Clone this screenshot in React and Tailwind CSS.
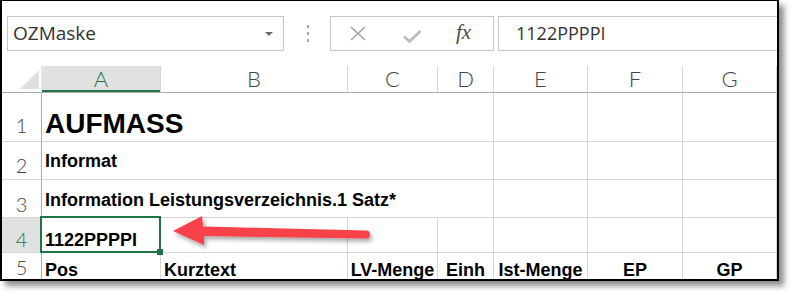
import React from 'react';

const cellFont = "font-['Liberation_Sans',Arial,sans-serif] font-bold leading-none text-black";
const headFont = "font-['Lato','Open_Sans',sans-serif] font-light leading-none";
const uiFont = "font-['Open_Sans','Noto_Sans',sans-serif]";

const columns = [
    { label: 'A', active: true },
    { label: 'B' },
    { label: 'C' },
    { label: 'D' },
    { label: 'E' },
    { label: 'F' },
    { label: 'G' },
];

const RowHead = ({ n, active, pad }) => (
    <div
        className={`flex justify-center border-r border-b border-r-[#ababab] border-b-[#d6d6d6] text-[20px] ${headFont} ${pad} ${
            active ? 'bg-[#e1e1e1] text-[#217346]' : 'bg-white text-[#444]'
        }`}
    >
        {n}
    </div>
);

const Cell = ({ children, className = '' }) => (
    <div className={`flex border-r border-b border-[#d6d6d6] whitespace-nowrap ${className}`}>{children}</div>
);

const FormulaBar = () => (
    <div className="h-[65px] flex items-start pt-[15px] pl-[5px]">
        <div className="w-[277px] h-[35px] border border-[#c6c6c6] flex items-center justify-between pl-[5px] pr-[10px]">
            <span className={`text-[19px] text-[#333] ${uiFont}`}>OZMaske</span>
            <span className="w-0 h-0 border-l-[4px] border-r-[4px] border-t-[4px] border-l-transparent border-r-transparent border-t-[#6a6a6a]" />
        </div>
        <div className="w-[46px] h-[35px] flex flex-col items-center justify-center gap-[4px] pl-[2px]">
            <span className="w-[2px] h-[3px] bg-[#a6a6a6]" />
            <span className="w-[2px] h-[3px] bg-[#a6a6a6]" />
            <span className="w-[2px] h-[3px] bg-[#a6a6a6]" />
        </div>
        <div className="w-[164px] h-[35px] border border-[#c6c6c6] flex items-center pl-[19px]">
            <svg width="16" height="15" viewBox="0 0 16 15">
                <path d="M1 1 L15 14 M15 1 L1 14" stroke="#a3a3a3" strokeWidth="1.5" fill="none" />
            </svg>
            <svg width="19" height="13" viewBox="0 0 19 13" className="ml-[37px] mt-[5px]">
                <path d="M1 6.5 L6.5 11.5 L17.5 1" stroke="#b9b9b9" strokeWidth="2.6" fill="none" />
            </svg>
            <span className="ml-[34px] -mt-[2px] font-['Liberation_Serif',serif] italic text-[21px] text-[#4a4a4a]">fx</span>
        </div>
        <div className="flex-1 h-[35px] ml-[4px] border border-r-0 border-[#c6c6c6] flex items-center pl-[17px]">
            <span className={`text-[18px] text-[#333] ${uiFont}`}>1122PPPPI</span>
        </div>
    </div>
);

const Arrow = () => (
    <svg className="absolute inset-0 pointer-events-none" width="793" height="296" viewBox="0 0 793 296">
        <defs>
            <filter id="arrowShadow" x="-10%" y="-50%" width="120%" height="200%">
                <feDropShadow dx="2" dy="3" stdDeviation="2" floodColor="#000" floodOpacity="0.35" />
            </filter>
        </defs>
        <path
            d="M173 231 L202 216 L203 226.5 L366 230.5 A4 4 0 0 1 366 238.5 L204 236 L204 245 Z"
            fill="#f7434a"
            filter="url(#arrowShadow)"
        />
    </svg>
);

export default function App() {
    return (
        <div className="relative w-[793px] h-[296px] bg-white overflow-hidden">
            <div className="w-[779px] h-[281px] border-t border-l-2 border-r-2 border-b-2 border-black bg-white overflow-hidden shadow-[5px_5px_6px_rgba(0,0,0,0.45)]">
                <FormulaBar />
                <div className="grid grid-cols-[40px_119px_187px_90px_56px_94px_95px_94px] grid-rows-[27px_49px_38px_38px_35px_38px]">
                    {/* select-all corner */}
                    <div className="flex items-start pl-[18px] pt-[4px] border-b border-r border-b-[#ababab] border-r-[#e6e6e6]">
                        <svg width="19" height="19" viewBox="0 0 19 19">
                            <path d="M19 0 L19 19 L0 19 Z" fill="#dfdfdf" />
                        </svg>
                    </div>
                    {columns.map(col => (
                        <div
                            key={col.label}
                            className={`flex items-end justify-center pb-[2px] border-b border-r border-b-[#ababab] border-r-[#d6d6d6] text-[22px] ${headFont} ${
                                col.active ? 'bg-[#e1e1e1] text-[#217346] shadow-[inset_0_-2px_0_#217346]' : 'text-[#444]'
                            }`}
                        >
                            {col.label}
                        </div>
                    ))}

                    {/* row 1 */}
                    <RowHead n="1" pad="items-end pb-[6px]" />
                    <Cell className="col-span-4 items-end pl-[3px] pb-[3px]">
                        <span className={`${cellFont} text-[28px]`}>AUFMASS</span>
                    </Cell>
                    <Cell />
                    <Cell />
                    <Cell />

                    {/* row 2 */}
                    <RowHead n="2" pad="items-end pb-[4px]" />
                    <Cell className="col-span-4 items-end pl-[3px] pb-[9px]">
                        <span className={`${cellFont} text-[18px]`}>Informat</span>
                    </Cell>
                    <Cell />
                    <Cell />
                    <Cell />

                    {/* row 3 */}
                    <RowHead n="3" pad="items-end pb-[3px]" />
                    <Cell className="col-span-4 items-end pl-[3px] pb-[8px]">
                        <span className={`${cellFont} text-[18px]`}>Information Leistungsverzeichnis.1 Satz*</span>
                    </Cell>
                    <Cell />
                    <Cell />
                    <Cell />

                    {/* row 4 */}
                    <RowHead n="4" active pad="items-end pb-[3px]" />
                    <Cell className="relative items-end pl-[3px] pb-[3px]">
                        <span className={`${cellFont} text-[18px]`}>1122PPPPI</span>
                        <div className="absolute -left-[2px] -top-[2px] -right-px -bottom-px border-2 border-[#217346]" />
                        <div className="absolute -right-[3px] -bottom-[3px] w-[6px] h-[6px] bg-[#217346]" />
                    </Cell>
                    <Cell />
                    <Cell />
                    <Cell />
                    <Cell />
                    <Cell />
                    <Cell />

                    {/* row 5 */}
                    <RowHead n="5" pad="items-start pt-[4px]" />
                    <Cell className="items-start pt-[8px] pl-[3px]">
                        <span className={`${cellFont} text-[18px]`}>Pos</span>
                    </Cell>
                    <Cell className="items-start pt-[8px] pl-[3px]">
                        <span className={`${cellFont} text-[18px]`}>Kurztext</span>
                    </Cell>
                    <Cell className="items-start justify-center pt-[8px]">
                        <span className={`${cellFont} text-[18px]`}>LV-Menge</span>
                    </Cell>
                    <Cell className="items-start justify-center pt-[8px]">
                        <span className={`${cellFont} text-[18px]`}>Einh</span>
                    </Cell>
                    <Cell className="items-start justify-center pt-[8px]">
                        <span className={`${cellFont} text-[18px]`}>Ist-Menge</span>
                    </Cell>
                    <Cell className="items-start justify-center pt-[8px]">
                        <span className={`${cellFont} text-[18px]`}>EP</span>
                    </Cell>
                    <Cell className="items-start justify-center pt-[8px]">
                        <span className={`${cellFont} text-[18px]`}>GP</span>
                    </Cell>
                </div>
            </div>
            <Arrow />
        </div>
    );
}
